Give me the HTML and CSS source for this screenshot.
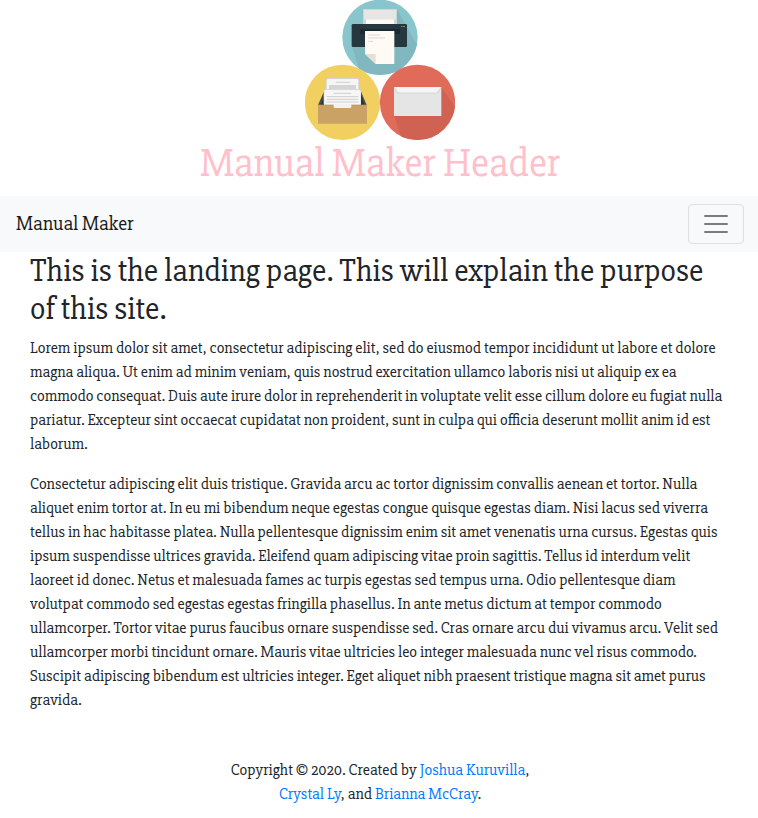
FILE: index.html
```
<!DOCTYPE html>
<html lang="en">
<head>
<meta charset="utf-8">
<title>Manual Maker</title>
<link rel="stylesheet" href="styles.css">
</head>
<body>
<header class="site-header">
<svg class="logo" viewBox="15 0 450 420" aria-hidden="true">
<defs>
<clipPath id="top"><circle cx="240" cy="112" r="113"/></clipPath>
<clipPath id="right"><circle cx="352.500" cy="307" r="113"/></clipPath>
</defs>
<circle cx="240" cy="112" r="113" fill="#89c5cc"/>
<path clip-path="url(#top)" d="M290 27L360 150V230H185L156 140H290Z" fill="#81b7bf"/>
<path d="M189 27H291V73H189Z" fill="#d2d5d6"/>
<path d="M192 30H288V58H192Z" fill="#e6e6e7"/>
<path d="M198 58H282V73H198Z" fill="#fff9f1"/>
<rect x="155" y="72" width="166" height="69" rx="4" fill="#263740"/>
<path d="M180 87H300V102H180Z" fill="#1c2a31"/>
<path d="M303 78H307V81H303Z" fill="#cf5b50"/><path d="M308 78H315V81H308Z" fill="#5c9b58"/>
<path d="M195 93H283V192H227L195 162Z" fill="#fffaf3"/>
<path d="M195 162H227V192Z" fill="#e6dfd3"/>
<path d="M205 105H240M205 114H255M205 124H219" stroke="#d9d6d2" stroke-width="3"/>
<circle cx="127.500" cy="307" r="113" fill="#f1cf60"/>
<path d="M74 270H181L200 315H54Z" fill="#4f4e3d"/>
<path d="M76 275H180L194 315H62Z" fill="#263740"/>
<rect x="78" y="234" width="99" height="60" rx="6" fill="#d3d4d5"/>
<rect x="80" y="237" width="95" height="60" rx="5" fill="#f5f5f5"/>
<path d="M107 247H149" stroke="#d0d0d0" stroke-width="3"/><path d="M87 255H168V268H87Z" fill="#d5d5d5"/>
<rect x="71" y="267" width="112" height="50" rx="5" fill="#d8d8d8"/>
<rect x="73" y="270" width="109" height="48" rx="5" fill="#f6f6f6"/>
<path d="M101 280H154M80 290H175M80 298H175M80 306H175" stroke="#cfcfcf" stroke-width="3"/>
<path d="M54 315H201V371H54Z" fill="#cba265"/>
<path d="M54 315H201" stroke="#b9945e" stroke-width="2"/>
<path d="M101 311H154V320Q154 324 150 324H105Q101 324 101 320Z" fill="#f2f2f2"/>
<circle cx="352.500" cy="307" r="113" fill="#e06b59"/>
<path clip-path="url(#right)" d="M424 262L475 335V430H310L282 348H424Z" fill="#cf6252"/>
<path d="M282 261H424V348H282Z" fill="#e5e5e5"/>
<path d="M283 262H423L407 279H298Z" fill="#f5f5f5"/>
<path d="M283 262L291 277Q293 279 297 279H409Q413 279 415 277L423 262" fill="none" stroke="#d0d0d0" stroke-width="2"/>
</svg>
<h1>Manual Maker Header</h1>
</header>
<nav class="navbar">
<a class="brand">Manual Maker</a>
<button class="toggler" aria-label="Toggle navigation"><svg viewBox="0 0 30 30" width="30" height="30"><path d="M4 7H26M4 15H26M4 23H26" stroke="#7c7c7d" stroke-width="2" stroke-linecap="round"/></svg></button>
</nav>
<main>
<h2>This is the landing page. This will explain the purpose<br>of this site.</h2>
<p>Lorem ipsum dolor sit amet, consectetur adipiscing elit, sed do eiusmod tempor incididunt ut labore et dolore<br>
magna aliqua. Ut enim ad minim veniam, quis nostrud exercitation ullamco laboris nisi ut aliquip ex ea<br>
commodo consequat. Duis aute irure dolor in reprehenderit in voluptate velit esse cillum dolore eu fugiat nulla<br>
pariatur. Excepteur sint occaecat cupidatat non proident, sunt in culpa qui officia deserunt mollit anim id est<br>
laborum.</p>
<p>Consectetur adipiscing elit duis tristique. Gravida arcu ac tortor dignissim convallis aenean et tortor. Nulla<br>
aliquet enim tortor at. In eu mi bibendum neque egestas congue quisque egestas diam. Nisi lacus sed viverra<br>
tellus in hac habitasse platea. Nulla pellentesque dignissim enim sit amet venenatis urna cursus. Egestas quis<br>
ipsum suspendisse ultrices gravida. Eleifend quam adipiscing vitae proin sagittis. Tellus id interdum velit<br>
laoreet id donec. Netus et malesuada fames ac turpis egestas sed tempus urna. Odio pellentesque diam<br>
volutpat commodo sed egestas egestas fringilla phasellus. In ante metus dictum at tempor commodo<br>
ullamcorper. Tortor vitae purus faucibus ornare suspendisse sed. Cras ornare arcu dui vivamus arcu. Velit sed<br>
ullamcorper morbi tincidunt ornare. Mauris vitae ultricies leo integer malesuada nunc vel risus commodo.<br>
Suscipit adipiscing bibendum est ultricies integer. Eget aliquet nibh praesent tristique magna sit amet purus<br>
gravida.</p>
</main>
<footer>Copyright © 2020. Created by <a>Joshua Kuruvilla</a>,<br><a>Crystal Ly</a>, and <a>Brianna McCray</a>.</footer>
</body>
</html>
```
FILE: styles.css
```
* { box-sizing: border-box; }
body {
  margin: 0;
  background: #fff;
  color: #212529;
  font: 16px/24px "Slabo 27px", "Liberation Serif", serif;
  overflow: hidden;
}
.site-header { padding-left: 2px; text-align: center; }
.logo { display: block; width: 150px; height: 140px; margin: 0 auto; }
h1, h2 { font-weight: 400; white-space: nowrap; }
h1 { margin: 0 0 8px; font-size: 40px; line-height: 48px; color: pink; }
h2 { margin: 0 0 7.4px; font-size: 32px; line-height: 38.4px; }
.navbar {
  display: flex;
  align-items: center;
  justify-content: space-between;
  height: 56px;
  padding: 8px 14px 8px 16px;
  background: #f8f9fb;
}
.brand { font-size: 20px; line-height: 30px; }
.toggler {
  display: flex;
  align-items: center;
  justify-content: center;
  width: 56px;
  height: 40px;
  padding: 0;
  border: 1px solid #dfe0e2;
  border-radius: 4px;
  background: transparent;
}
main { padding: 0 30px; }
p { margin: 0 0 16px; white-space: nowrap; }
footer { padding: 29.6px 0 12px 2px; text-align: center; }
a { color: #007bff; }
.navbar a { color: #191919; }
```
